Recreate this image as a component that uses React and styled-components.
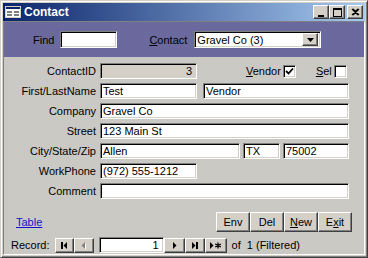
import React from 'react';
import styled, { createGlobalStyle, css } from 'styled-components';

const GlobalStyle = createGlobalStyle`
    body {
        margin: 0;
        background: #d4d0c8;
        font-family: "Liberation Sans", Arial, sans-serif;
        font-size: 11px;
        color: #000;
    }
`

const raised = css`
    box-sizing: border-box;
    background: #d4d0c8;
    border: 1px solid;
    border-color: #fff #404040 #404040 #fff;
    box-shadow: inset -1px -1px #808080;
`

const sunken = css`
    box-sizing: border-box;
    border: 1px solid;
    border-color: #808080 #fff #fff #808080;
    box-shadow: inset 1px 1px #000, inset -1px -1px #d4d0c8;
`

const dithered = css`
    background: repeating-conic-gradient(#cec8c6 0 25%, #c6c8c2 0 50%) 0 0 / 2px 2px;
`

const Window = styled.div`
    width: 368px;
    height: 258px;
    box-sizing: border-box;
    background: #d4d0c8;
    border: 1px solid;
    border-color: #d4d0c8 #404040 #404040 #d4d0c8;
    box-shadow: inset 1px 1px #fff, inset -1px -1px #808080;
    padding: 2px;
    display: flex;
    flex-direction: column;
`

const TitleBar = styled.div`
    height: 18px;
    flex: none;
    display: flex;
    align-items: center;
    padding: 0 2px 0 2px;
    background: linear-gradient(to right, #0a246a, #a6caf0);
    color: #fff;
    font-weight: bold;
    font-size: 12px;
    .title {
        margin-left: 3px;
        flex: 1;
    }
`

const CaptionButton = styled.div`
    ${raised}
    width: 16px;
    height: 14px;
    display: flex;
    align-items: center;
    justify-content: center;
    margin-left: ${p => p.$gap || 0}px;
`

const Client = styled.div`
    flex: 1;
    display: flex;
    flex-direction: column;
    border: 1px solid;
    border-color: #808080 #fff #fff #808080;
`

const Header = styled.div`
    height: 35px;
    flex: none;
    display: flex;
    align-items: center;
    padding-left: 29px;
    background: repeating-conic-gradient(#6e6ba2 0 25%, #68679a 0 50%) 0 0 / 2px 2px;
`

const HeaderLabel = styled.span`
    margin-left: ${p => p.$ml}px;
    margin-right: ${p => p.$mr}px;
`

const Field = styled.div`
    ${sunken}
    width: ${p => p.$w}px;
    height: ${p => p.$h || 16}px;
    margin-left: ${p => p.$ml || 0}px;
    background: ${p => (p.$disabled ? '#d4d0c8' : '#fff')};
    display: flex;
    align-items: center;
    justify-content: ${p => (p.$right ? 'flex-end' : 'flex-start')};
    padding: 0 ${p => (p.$right ? 4 : 2)}px 0 2px;
    white-space: nowrap;
    overflow: hidden;
`

const Combo = styled(Field)`
    padding-right: 2px;
    .text {
        flex: 1;
    }
`

const DropButton = styled.div`
    ${raised}
    width: 16px;
    height: 13px;
    display: flex;
    align-items: center;
    justify-content: center;
`

const Detail = styled.div`
    flex: 1;
    ${dithered}
    padding: 6px 12px 0 0;
    display: flex;
    flex-direction: column;
    gap: 4px;
`

const Row = styled.div`
    display: flex;
    align-items: center;
    height: 16px;
`

const Label = styled.div`
    width: 92px;
    text-align: right;
    margin-right: 4px;
    white-space: nowrap;
`

const CheckLabel = styled.span`
    margin-left: ${p => p.$ml}px;
    margin-right: 2px;
`

const CheckBox = styled.div`
    ${sunken}
    width: 13px;
    height: 13px;
    background: #fff;
    display: flex;
    align-items: center;
    justify-content: center;
`

const Footer = styled.div`
    display: flex;
    align-items: center;
    margin-top: 9px;
    padding-left: 12px;
    a {
        color: #1414c8;
        text-decoration: underline;
    }
`

const ButtonGroup = styled.div`
    margin-left: auto;
    display: flex;
`

const CommandButton = styled.div`
    ${raised}
    width: 34px;
    height: 20px;
    display: flex;
    align-items: center;
    justify-content: center;
`

const NavBar = styled.div`
    height: 18px;
    flex: none;
    ${dithered}
    display: flex;
    align-items: center;
    padding-left: 7px;
    .of {
        margin-left: 5px;
        white-space: pre;
    }
`

const NavButton = styled.div`
    ${raised}
    width: ${p => p.$w || 20}px;
    height: 15px;
    margin-left: ${p => p.$ml || 0}px;
    display: flex;
    align-items: center;
    justify-content: center;
`

function FormIcon() {
    return (
        <svg width="16" height="12" viewBox="0 0 16 12">
            <rect x="0.5" y="0.5" width="15" height="11" fill="#fff" stroke="#d4d0c8" />
            <rect x="1" y="1" width="14" height="2" fill="#0a246a" />
            <rect x="2" y="5" width="5" height="2" fill="#808080" />
            <rect x="9" y="5" width="5" height="2" fill="#808080" />
            <rect x="2" y="8" width="5" height="2" fill="#808080" />
            <rect x="9" y="8" width="5" height="2" fill="#808080" />
        </svg>
    );
}

function Glyph({ type, color = '#000' }) {
    const shapes = {
        min: <rect x="2" y="7" width="6" height="2" fill={color} />,
        max: <path d="M1 0h9v9H1z M2 2v6h7V2z" fill={color} fillRule="evenodd" />,
        close: <path d="M1 1l6 6M7 1l-6 6M2 1l6 6M8 1l-6 6" stroke={color} strokeWidth="1.2" />,
        down: <path d="M0 0h7L3.5 4z" fill={color} />,
        first: <path d="M1 0h2v7H1z M7 0v7L3.5 3.5z" fill={color} />,
        prev: <path d="M5 0v7L1.5 3.5z" fill={color} />,
        next: <path d="M2 0v7l3.5-3.5z" fill={color} />,
        last: <path d="M1 0v7l3.5-3.5z M5 0h2v7H5z" fill={color} />,
        add: (
            <g>
                <path d="M0 0v7l3.5-3.5z" fill={color} />
                <path d="M8 0.5v6M5.2 2l5.6 3M5.2 5l5.6-3" stroke={color} strokeWidth="1.3" />
            </g>
        ),
    };
    const sizes = {
        min: [10, 9], max: [11, 9], close: [9, 8], down: [7, 4],
        first: [8, 7], prev: [7, 7], next: [7, 7], last: [8, 7], add: [11, 7],
    };
    const [w, h] = sizes[type];
    return (
        <svg width={w} height={h} viewBox={`0 0 ${w} ${h}`}>
            {type === 'prev' && (
                <path d="M6 1v7L2.5 4.5z" fill="#fff" />
            )}
            {shapes[type]}
        </svg>
    );
}

function Check() {
    return (
        <svg width="9" height="9" viewBox="0 0 9 9">
            <path d="M1 4l2.5 2.5L8 1.5" stroke="#000" strokeWidth="1.8" fill="none" />
        </svg>
    );
}

function App() {
    return (
        <>
            <GlobalStyle />
            <Window>
                <TitleBar>
                    <FormIcon />
                    <span className="title">Contact</span>
                    <CaptionButton><Glyph type="min" /></CaptionButton>
                    <CaptionButton><Glyph type="max" /></CaptionButton>
                    <CaptionButton $gap={2}><Glyph type="close" /></CaptionButton>
                </TitleBar>
                <Client>
                    <Header>
                        <HeaderLabel $ml={0} $mr={6}>Find</HeaderLabel>
                        <Field $w={57} $h={17} />
                        <HeaderLabel $ml={32} $mr={7}><u>C</u>ontact</HeaderLabel>
                        <Combo $w={127} $h={17}>
                            <span className="text">Gravel Co (3)</span>
                            <DropButton><Glyph type="down" /></DropButton>
                        </Combo>
                    </Header>
                    <Detail>
                        <Row>
                            <Label>ContactID</Label>
                            <Field $w={97} $disabled $right>3</Field>
                            <CheckLabel $ml={49}><u>V</u>endor</CheckLabel>
                            <CheckBox><Check /></CheckBox>
                            <CheckLabel $ml={20}><u>S</u>el</CheckLabel>
                            <CheckBox />
                        </Row>
                        <Row>
                            <Label>First/LastName</Label>
                            <Field $w={97}>Test</Field>
                            <Field $w={146} $ml={6}>Vendor</Field>
                        </Row>
                        <Row>
                            <Label>Company</Label>
                            <Field $w={249}>Gravel Co</Field>
                        </Row>
                        <Row>
                            <Label>Street</Label>
                            <Field $w={249}>123 Main St</Field>
                        </Row>
                        <Row>
                            <Label>City/State/Zip</Label>
                            <Field $w={140}>Allen</Field>
                            <Field $w={37} $ml={3}>TX</Field>
                            <Field $w={66} $ml={3}>75002</Field>
                        </Row>
                        <Row>
                            <Label>WorkPhone</Label>
                            <Field $w={97}>(972) 555-1212</Field>
                        </Row>
                        <Row>
                            <Label>Comment</Label>
                            <Field $w={249} />
                        </Row>
                        <Footer>
                            <a>Table</a>
                            <ButtonGroup>
                                <CommandButton>Env</CommandButton>
                                <CommandButton>Del</CommandButton>
                                <CommandButton><span><u>N</u>ew</span></CommandButton>
                                <CommandButton><span>E<u>x</u>it</span></CommandButton>
                            </ButtonGroup>
                        </Footer>
                    </Detail>
                    <NavBar>
                        <span>Record:</span>
                        <NavButton $w={19} $ml={5}><Glyph type="first" /></NavButton>
                        <NavButton $w={20}><Glyph type="prev" color="#808080" /></NavButton>
                        <Field $w={65} $h={16} $ml={5} $right>1</Field>
                        <NavButton $w={21}><Glyph type="next" /></NavButton>
                        <NavButton $w={20}><Glyph type="last" /></NavButton>
                        <NavButton $w={22}><Glyph type="add" /></NavButton>
                        <span className="of">of  1 (Filtered)</span>
                    </NavBar>
                </Client>
            </Window>
        </>
    );
}

export default App;
